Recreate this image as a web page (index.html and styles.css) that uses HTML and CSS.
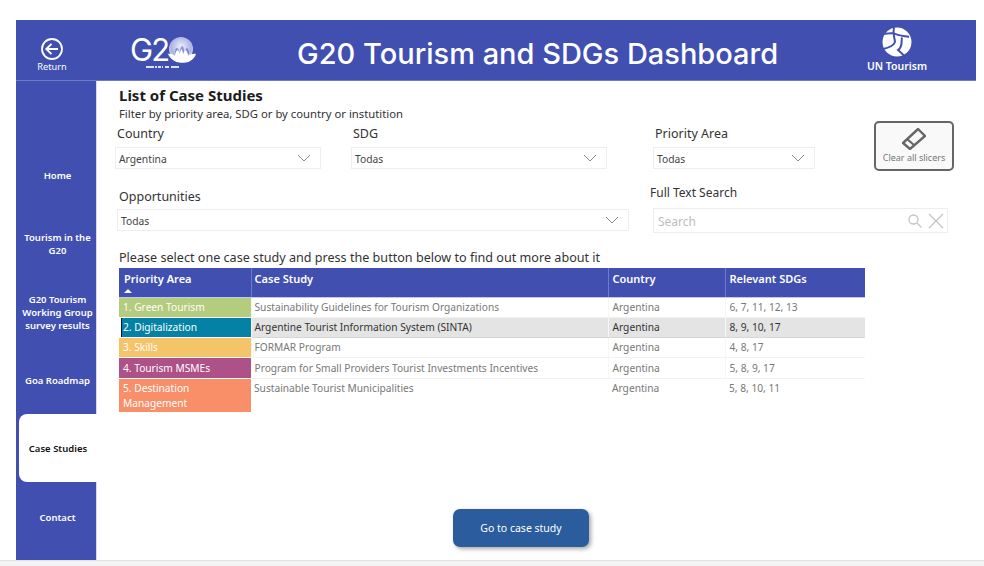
FILE: index.html
```html
<!DOCTYPE html>
<html lang="en">
<head>
<meta charset="utf-8">
<title>G20 Tourism and SDGs Dashboard</title>
<link rel="stylesheet" href="styles.css">
</head>
<body>
<div class="report">
  <header class="topbar">
    <div class="return">
      <svg class="return-icon" width="24" height="24" viewBox="0 0 24 24"><circle cx="12" cy="12" r="10" fill="none" stroke="#fff" stroke-width="1.8"/><path d="M18 12H6.500M11.500 6.800 6.300 12l5.200 5.200" fill="none" stroke="#fff" stroke-width="1.900"/></svg>
      <span>Return</span>
    </div>
    <div class="g20">
      <svg width="70" height="48" viewBox="0 0 70 48">
        <defs><radialGradient id="glb" cx=".5" cy=".4" r=".6"><stop offset="0" stop-color="#f0f1fb"/><stop offset=".7" stop-color="#aab3e4"/><stop offset="1" stop-color="#d5d9f4"/></radialGradient></defs>
        <text x="0" y="34" class="g20-text">G2</text>
        <circle cx="51" cy="22" r="12" fill="url(#glb)"/>
        <path d="M45 27c0-3 .5-6 2-6s2 3 2 6zM50 27c0-4 .5-8 2-8s2.500 4 2.500 8zM55 27c0-3 1-6 2-6s2 3 2 6z" fill="#414fb0" opacity=".5"/>
        <path d="M37 27c3-.5 6 .5 8 2 0-2.500 1-5 2.500-6 1 1 2 2.500 2.500 4.500 0-2 .5-4 1.500-5.500 1 1.500 1.500 3.500 1.500 5.500 .5-2 1.500-3.500 2.500-4.500 1.500 1 2.500 3.500 2.500 6 2-1.500 5-2.500 8-2-1 3.500-4 6.500-7.500 8-3 1-9 1-12 0-4-1.500-7-4.500-8.500-8z" fill="#fff"/>
        <path d="M16 40h34" stroke="#dfe2f6" stroke-width="2" stroke-dasharray="8 1 2 1 3 1 1 2 4 2"/>
      </svg>
    </div>
    <h1 class="dash-title">G20 Tourism and SDGs Dashboard</h1>
    <div class="un">
      <svg width="30" height="30" viewBox="0 0 30 30">
        <circle cx="15" cy="15" r="14.500" fill="#fff"/>
        <path d="M12 -1 11.500 6M-1 7 11.500 6 13 15Q11 20 1 22M11.500 6C16 9 22 9 27 10M20 10.500C19 15 21 20 16 23 18 25 21 27 22 29" fill="none" stroke="#414fb0" stroke-width="2"/>
      </svg>
      <span>UN Tourism</span>
    </div>
  </header>
  <div class="body-row">
    <nav class="sidebar">
      <a class="nav-item">Home</a>
      <a class="nav-item">Tourism in the G20</a>
      <a class="nav-item">G20 Tourism Working Group survey results</a>
      <a class="nav-item">Goa Roadmap</a>
      <a class="nav-item active">Case Studies</a>
      <a class="nav-item">Contact</a>
    </nav>
    <main class="content">
      <h2 class="page-title">List of Case Studies</h2>
      <p class="page-sub">Filter by priority area, SDG or by country or instutition</p>
      <div class="filters-one">
        <div class="field country">
          <label class="field-label">Country</label>
          <div class="select"><span>Argentina</span><svg class="chev" width="14" height="8" viewBox="0 0 14 8"><path d="M1 1l6 6 6-6" fill="none" stroke="#8a8a8a"/></svg></div>
        </div>
        <div class="field sdg">
          <label class="field-label">SDG</label>
          <div class="select"><span>Todas</span><svg class="chev" width="14" height="8" viewBox="0 0 14 8"><path d="M1 1l6 6 6-6" fill="none" stroke="#8a8a8a"/></svg></div>
        </div>
        <div class="field priority">
          <label class="field-label">Priority Area</label>
          <div class="select"><span>Todas</span><svg class="chev" width="14" height="8" viewBox="0 0 14 8"><path d="M1 1l6 6 6-6" fill="none" stroke="#8a8a8a"/></svg></div>
        </div>
        <button class="clear-btn">
          <svg width="24" height="22" viewBox="0 0 24 22"><path d="M16 1 23 8 8 21 1 15z" fill="none" stroke="#666" stroke-width="2.400"/><path d="M5 11l7 6" stroke="#666" stroke-width="2.200"/></svg>
          <span>Clear all slicers</span>
        </button>
      </div>
      <div class="filters-two">
        <div class="field opportunities">
          <label class="field-label">Opportunities</label>
          <div class="select"><span>Todas</span><svg class="chev" width="14" height="8" viewBox="0 0 14 8"><path d="M1 1l6 6 6-6" fill="none" stroke="#8a8a8a"/></svg></div>
        </div>
        <div class="field fulltext">
          <label class="field-label search-label">Full Text Search</label>
          <div class="search">
            <span>Search</span>
            <svg width="14" height="14" viewBox="0 0 14 14"><circle cx="5.500" cy="5.500" r="4.500" fill="none" stroke="#c4c4c4" stroke-width="1.300"/><path d="M9 9l4.500 4.500" stroke="#c4c4c4" stroke-width="1.300"/></svg>
            <svg width="16" height="16" viewBox="0 0 16 16"><path d="M1 1l14 14M15 1 1 15" stroke="#c4c4c4" stroke-width="1.300"/></svg>
          </div>
        </div>
      </div>
      <p class="instruction">Please select one case study and press the button below to find out more about it</p>
      <table class="cases">
        <colgroup><col class="c1"><col class="c2"><col class="c3"><col class="c4"></colgroup>
        <thead>
          <tr><th>Priority Area<i class="sort"></i></th><th>Case Study</th><th>Country</th><th>Relevant SDGs</th></tr>
        </thead>
        <tbody>
          <tr><td class="area green">1. Green Tourism</td><td>Sustainability Guidelines for Tourism Organizations</td><td>Argentina</td><td>6, 7, 11, 12, 13</td></tr>
          <tr class="selected"><td class="area teal">2. Digitalization</td><td>Argentine Tourist Information System (SINTA)</td><td>Argentina</td><td>8, 9, 10, 17</td></tr>
          <tr><td class="area yellow">3. Skills</td><td>FORMAR Program</td><td>Argentina</td><td>4, 8, 17</td></tr>
          <tr class="tall"><td class="area purple">4. Tourism MSMEs</td><td>Program for Small Providers Tourist Investments Incentives</td><td>Argentina</td><td>5, 8, 9, 17</td></tr>
          <tr class="last"><td class="area orange">5. Destination Management</td><td>Sustainable Tourist Municipalities</td><td>Argentina</td><td>5, 8, 10, 11</td></tr>
        </tbody>
      </table>
      <div class="action"><button class="go-btn">Go to case study</button></div>
    </main>
  </div>
</div>
<div class="statusbar"></div>
</body>
</html>
```
FILE: styles.css
```css
* { box-sizing: border-box; }
html, body { margin: 0; height: 566px; overflow: hidden; background: #fff; }
body { font-family: "Noto Sans", "Open Sans", sans-serif; color: #252423; }

.report { margin: 20px 8px 0 16px; height: 540px; display: flex; flex-direction: column; }

.topbar { height: 61px; flex: none; background: #414fb0; border-bottom: 1px solid #6f7bc8; display: flex; align-items: center; color: #fff; }
.return { width: 72px; display: flex; flex-direction: column; align-items: center; margin-top: 9px; }
.return-icon { display: block; }
.return span { font-size: 9.200px; line-height: 12px; margin-top: 0; }
.g20 { width: 65px; margin-left: 42px; margin-top: 2px; }
.g20 svg { display: block; overflow: visible; }
.g20-text { font-family: "Inter", sans-serif; font-size: 31px; font-weight: 400; fill: #fff; letter-spacing: -2px; }
.dash-title { font-family: "Inter", sans-serif; font-size: 29px; font-weight: 500; margin: 8px 0 0 102px; width: 481px; white-space: nowrap; line-height: 36px; }
.un { margin-left: 89px; width: 60px; display: flex; flex-direction: column; align-items: center; margin-top: -2px; }
.un svg { display: block; }
.un span { font-size: 10.500px; font-weight: 600; line-height: 12px; margin-top: 3px; white-space: nowrap; }

.body-row { flex: 1; display: flex; min-height: 0; }
.sidebar { width: 81px; flex: none; background: #414fb0; border-right: 1px solid #d5d8ee; padding: 60px 0 0 3px; display: flex; flex-direction: column; }
.nav-item { height: 68.200px; flex: none; display: flex; align-items: center; justify-content: center; text-align: center; color: #fff; font-size: 9.500px; font-weight: 600; line-height: 13px; padding: 2px 2px 0; }
.nav-item:first-child { padding-top: 0; }
.nav-item.active { background: #fff; color: #111; border-radius: 8px 0 0 8px; margin-right: -1px; }

.content { flex: 1; min-width: 0; padding: 4px 0 0 18px; }
.page-title { margin: 0 0 0 4px; font-size: 15px; font-weight: 700; line-height: 20px; color: #1c1c1c; }
.page-sub { margin: 1px 0 0 4px; font-size: 11.300px; line-height: 16px; color: #333; }

.field-label { display: block; font-size: 12.500px; line-height: 18px; color: #333; }
.select { height: 22px; border: 1px solid #eeeeee; display: flex; align-items: center; justify-content: space-between; padding: 2px 4px 0 3px; font-size: 10.300px; color: #444; margin-top: 4px; }
.chev { margin: -2px 5px 0 0; }

.filters-one { display: flex; align-items: flex-start; margin-top: -1px; }
.field.country { width: 206px; padding-top: 4px; }
.field.country .field-label { padding-left: 2px; }
.field.sdg { width: 256px; margin-left: 30px; padding-top: 4px; }
.field.sdg .field-label { padding-left: 2px; }
.field.priority { width: 162px; margin-left: 46px; padding-top: 4px; }
.field.priority .field-label { padding-left: 2px; }
.clear-btn { width: 80px; height: 50px; margin-left: 59px; border: 2px solid #666; border-radius: 5px; background: #f9f9f9; padding: 5px 0 0; display: flex; flex-direction: column; align-items: center; font-family: inherit; font-size: 9px; color: #777; line-height: 12px; }
.clear-btn svg { display: block; margin-bottom: 2px; }

.filters-two { display: flex; align-items: flex-start; margin-top: 15px; padding-left: 2px; }
.field.opportunities { width: 512px; }
.field.opportunities .field-label { margin-top: 2px; padding-left: 2px; }
.field.opportunities .select { margin-top: 3px; }
.field.fulltext { width: 295px; margin-left: 24px; }
.search-label { font-size: 12px; font-weight: 400; margin-left: -3px; margin-top: -2px; }
.search { height: 25px; margin-top: 6px; border: 1px solid #eeeeee; display: flex; align-items: center; gap: 6px; padding: 0 3px 0 4px; font-size: 12px; color: #bdbdbd; }
.search span { flex: 1; padding-top: 2px; }

.instruction { margin: 16px 0 0 4px; font-size: 12.600px; line-height: 18px; color: #333; }

.cases { table-layout: fixed; width: 746px; margin: 1px 0 0 4px; border-collapse: collapse; font-size: 10.200px; line-height: 15px; }
.c1 { width: 132px; } .c2 { width: 357px; } .c3 { width: 117px; } .c4 { width: 140px; }
.cases th { background: #414fb0; color: #fff; text-align: left; font-size: 11px; font-weight: 600; height: 29px; padding: 3px 4px 0; vertical-align: top; border-left: 1px solid #6f7bc8; border-bottom: 1px solid #c3c8ea; line-height: 16px; position: relative; }
.cases th:first-child { border-left: 0; padding-left: 5px; }
.cases th:nth-child(2) { padding-left: 3px; }
.sort { position: absolute; left: 5px; bottom: 4px; border-left: 4px solid transparent; border-right: 4px solid transparent; border-bottom: 4px solid #fff; }
.cases td { height: 20px; padding: 2px 4px 0 3px; vertical-align: top; color: #787878; border-bottom: 1px solid #f2f2f2; border-left: 1px solid #f6f6f6; }
.cases td:first-child { border-left: 0; padding-left: 4px; }
.cases td:nth-child(n+3) { padding-left: 4px; }
.cases td.area { color: #fff; opacity: .98; border-bottom: 1px solid #fff; }
.green { background: #b3cb7b; }
.teal { background: #007fa3; box-shadow: inset 2px 0 0 #fff, inset 3px 0 0 #111; }
.yellow { background: #f5c265; }
.purple { background: #ac4e86; }
.orange { background: #f98d66; }
.selected td { background: #e4e4e4; color: #333; border-bottom: 1px solid #d6d6d6; }
.selected td.teal { background: #007fa3; }
.tall td { height: 21px; padding-top: 3px; }
.last td { height: 34px; border-bottom: 0; border-left: 0; }
.last td.area { border-bottom: 0; }

.action { margin-top: 97px; padding-left: 338px; }
.go-btn { width: 136px; height: 38px; border: 0; border-radius: 7px; background: #2a5c9e; color: #fff; font-family: inherit; font-size: 10.500px; box-shadow: 2px 2px 4px rgba(0,0,0,.35); padding: 0; }

.statusbar { height: 6px; background: #f3f3f3; border-top: 1px solid #e0e0e0; }
```
